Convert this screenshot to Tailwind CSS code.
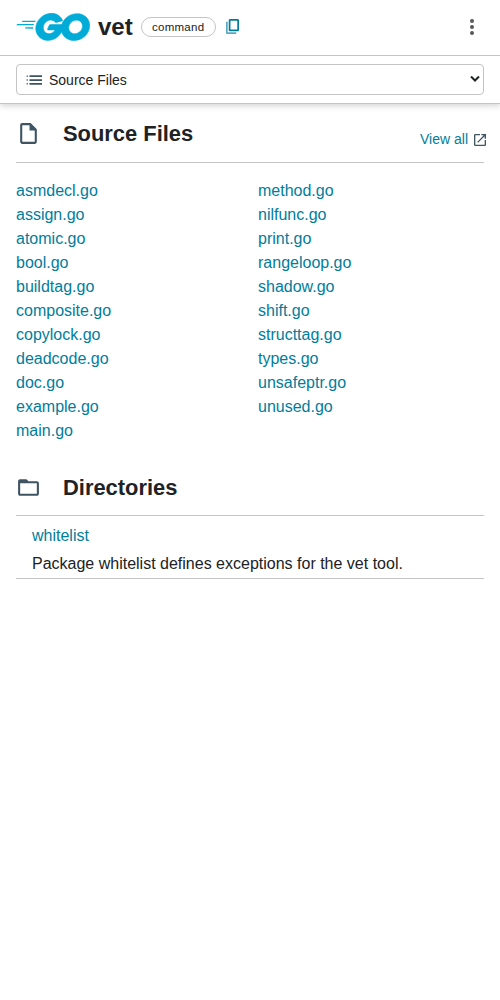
<!DOCTYPE html>
<html lang="en">
<head>
<meta charset="utf-8">
<title>vet command</title>
<script src="https://cdn.jsdelivr.net/npm/@tailwindcss/browser@4"></script>
</head>
<body class="min-h-screen bg-white font-['Liberation_Sans',Arial,sans-serif] text-base text-[#202224]">
<header class="bg-white shadow-[0_2px_6px_rgba(0,0,0,0.17)]">
  <div class="flex h-14 items-center border-b border-[#c4c4c4] px-4 pb-[2px]">
    <svg class="h-[28px] w-[74px] shrink-0" viewBox="0 0 207 79" preserveAspectRatio="none" fill="#00acd7"><path transform="translate(0 1.500)" d="M16.2 24.1c-.4 0-.5-.2-.3-.5l2.1-2.700c.2-.3.7-.5 1.1-.5h35.700c.4 0 .5.3.3.6l-1.700 2.600c-.2.3-.7.6-1 .6zM1.1 33.300c-.4 0-.5-.2-.3-.5l2.1-2.700c.2-.3.7-.5 1.1-.5h45.600c.4 0 .6.3.5.6l-.8 2.400c-.1.4-.5.6-.9.6zM25.300 42.500c-.4 0-.5-.3-.3-.6l1.400-2.500c.2-.3.6-.6 1-.6h20c.4 0 .6.3.6.7l-.2 2.400c0 .4-.4.7-.7.7z"/><g stroke="#00acd7" stroke-width="1.600"><path d="M129.1 22.3c-6.3 1.6-10.6 2.8-16.8 4.4-1.5.4-1.6.5-2.9-1-1.5-1.7-2.6-2.8-4.7-3.8-6.3-3.1-12.4-2.2-18.1 1.5-6.8 4.4-10.3 10.9-10.2 19 .1 8 5.6 14.6 13.5 15.7 6.8.9 12.5-1.5 17-6.6.9-1.1 1.7-2.3 2.7-3.7H90.3c-2.1 0-2.6-1.3-1.9-3 1.3-3.1 3.7-8.3 5.1-10.9.3-.6 1-1.6 2.5-1.6h36.4c-.2 2.7-.2 5.4-.6 8.1-1.1 7.2-3.8 13.8-8.2 19.6-7.2 9.5-16.6 15.4-28.5 17-9.8 1.3-18.9-.6-26.9-6.6-7.4-5.6-11.6-13-12.7-22.2-1.3-10.9 1.9-20.7 8.5-29.3C71.1 9.7 80.5 3.7 92 1.6c9.4-1.7 18.4-.6 26.5 4.9 5.3 3.500 9.1 8.3 11.6 14.1.6.9.2 1.4-1 1.7z"/><path d="M162.2 77.6c-9.1-.2-17.4-2.8-24.4-8.8-5.9-5.1-9.6-11.6-10.8-19.3-1.8-11.3 1.3-21.3 8.1-30.2 7.3-9.6 16.1-14.6 28-16.7 10.2-1.8 19.8-.8 28.5 5.1 7.9 5.4 12.8 12.7 14.1 22.3 1.7 13.5-2.2 24.5-11.5 33.9-6.6 6.7-14.7 10.9-24 12.8-2.7.5-5.4.6-8 .9zM186 37.2c-.1-1.3-.1-2.3-.3-3.3-1.8-9.9-10.9-15.5-20.4-13.3-9.3 2.1-15.3 8-17.5 17.4-1.8 7.8 2 15.7 9.2 18.9 5.5 2.4 11 2.1 16.3-.6 7.9-4.1 12.2-10.5 12.7-19.1z"/></g></svg>
    <h1 class="ml-2 text-2xl leading-7 font-bold">vet</h1>
    <span class="ml-2 flex h-5 w-[75px] items-center justify-center rounded-full border border-[#c4c4c4] pt-px text-[11.5px] leading-4 tracking-[0.25px]">command</span>
    <svg class="ml-[10px] h-[15px] w-[13px]" viewBox="2 1 19 22" preserveAspectRatio="none" fill="#007d9c"><path d="M19 1H8C6.900 1 6 1.900 6 3v14c0 1.100.9 2 2 2h11c1.100 0 2-.9 2-2V3c0-1.100-.9-2-2-2zm-.5 15.500h-10v-13h10z"/><path fill-opacity=".65" d="M4.500 5H2v16c0 1.100.9 2 2 2h13v-2.500H4.500z"/></svg>
    <svg class="ml-auto size-6" viewBox="0 0 24 24" fill="#555759"><path d="M12 8a2 2 0 1 0 0-4 2 2 0 0 0 0 4zm0 2a2 2 0 1 0 0 4 2 2 0 0 0 0-4zm0 6a2 2 0 1 0 0 4 2 2 0 0 0 0-4z"/></svg>
  </div>
  <div class="h-12 border-b border-[#c4c4c4] px-4 pt-2">
    <div class="flex h-[31px] items-center rounded border border-[#c4c4c4] pl-[9px] pr-[3px] text-sm">
      <svg class="h-4 w-4" viewBox="0 0 16 16" fill="#3e5461"><path fill-opacity=".75" d="M.5 3.500H2V5H.5zM.5 7.300H2v1.500H.5zM.5 11H2v1.500H.5z"/><path d="M3.500 3.300H16V5H3.500zM3.500 7.200H16v1.700H3.500zM3.500 11H16v1.700H3.500z"/></svg>
      <span class="ml-[7px]">Source Files</span>
      <svg class="mb-px ml-auto h-[6px] w-[10px]" viewBox="0 0 10 6" fill="none" stroke="#202224" stroke-width="2"><path d="M1 .5l4 4 4-4"/></svg>
    </div>
  </div>
</header>
<main class="px-4">
  <section>
    <div class="flex h-[59px] items-center border-b border-[#c4c4c4]">
      <svg class="size-[25px]" viewBox="0 0 24 24" fill="#3e5461"><path d="M14 2H6c-1.100 0-2 .9-2 2v16c0 1.100.9 2 2 2h12c1.100 0 2-.9 2-2V8zM6 4h7v5h5v11H6z"/></svg>
      <h2 class="ml-[22px] pt-[2px] text-[21.9px] leading-7 font-bold">Source Files</h2>
      <a class="-mr-[2px] ml-auto mt-3 flex items-center text-sm text-[#007d9c]">View all
        <svg class="ml-[6px] mt-px size-3" viewBox="3 3 18 18" fill="#3e5461"><path d="M19 19H5V5h7V3H5a2 2 0 0 0-2 2v14a2 2 0 0 0 2 2h14c1.100 0 2-.9 2-2v-7h-2zM14 3v2h3.590l-9.830 9.830 1.410 1.410L19 6.410V10h2V3z"/></svg>
      </a>
    </div>
    <div class="grid grid-cols-2 gap-x-4 pt-4 leading-6 text-[#007d9c]">
      <ul><li>asmdecl.go</li><li>assign.go</li><li>atomic.go</li><li>bool.go</li><li>buildtag.go</li><li>composite.go</li><li>copylock.go</li><li>deadcode.go</li><li>doc.go</li><li>example.go</li><li>main.go</li></ul>
      <ul><li>method.go</li><li>nilfunc.go</li><li>print.go</li><li>rangeloop.go</li><li>shadow.go</li><li>shift.go</li><li>structtag.go</li><li>types.go</li><li>unsafeptr.go</li><li>unused.go</li></ul>
    </div>
  </section>
  <section class="pt-[15px]">
    <div class="flex h-[58px] items-center border-b border-[#c4c4c4] pt-[2px]">
      <svg class="size-[25px]" viewBox="0 0 24 24" fill="#3e5461"><path d="M20 6h-8l-2-2H4c-1.100 0-2 .9-2 2v12c0 1.100.9 2 2 2h16c1.100 0 2-.9 2-2V8c0-1.100-.9-2-2-2zm0 12H4V8h16z"/></svg>
      <h2 class="ml-[22px] text-[21.9px] leading-7 font-bold">Directories</h2>
    </div>
    <div class="h-[63px] border-b border-[#c4c4c4] px-4 pt-2 leading-6">
      <a class="block text-[#007d9c]">whitelist</a>
      <p class="mt-1">Package whitelist defines exceptions for the vet tool.</p>
    </div>
  </section>
</main>
</body>
</html>
